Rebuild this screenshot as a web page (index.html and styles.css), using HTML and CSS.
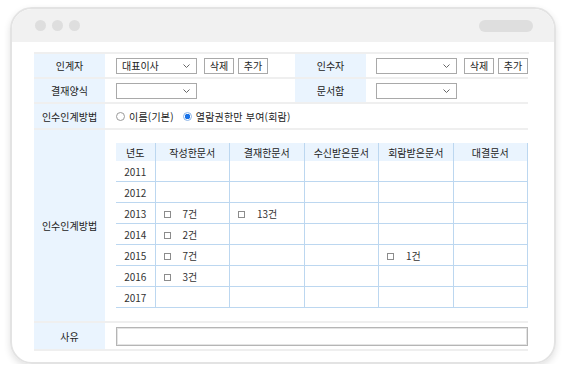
FILE: index.html
```html
<!DOCTYPE html>
<html lang="ko">
<head>
    <meta charset="UTF-8">
    <meta name="viewport" content="width=device-width, initial-scale=1.0">
    <title>인수인계</title>
    <link rel="stylesheet" href="styles.css">
</head>
<body>
<div class="window">
    <div class="titlebar">
        <div class="dots"><span></span><span></span><span></span></div>
        <div class="pill"></div>
    </div>

    <div class="content">
        <div class="form">
            <div class="label">인계자</div>
            <div class="value">
                <div class="select"><span>대표이사</span><svg width="7" height="4" viewBox="0 0 7 4"><path d="M0.5 0.5 L3.5 3.5 L6.5 0.5" fill="none" stroke="#666" stroke-width="1"/></svg></div>
                <button class="btn">삭제</button>
                <button class="btn">추가</button>
            </div>
            <div class="label">인수자</div>
            <div class="value value-right">
                <div class="select"><span></span><svg width="7" height="4" viewBox="0 0 7 4"><path d="M0.5 0.5 L3.5 3.5 L6.5 0.5" fill="none" stroke="#666" stroke-width="1"/></svg></div>
                <button class="btn">삭제</button>
                <button class="btn">추가</button>
            </div>

            <div class="label">결재양식</div>
            <div class="value">
                <div class="select"><span></span><svg width="7" height="4" viewBox="0 0 7 4"><path d="M0.5 0.5 L3.5 3.5 L6.5 0.5" fill="none" stroke="#666" stroke-width="1"/></svg></div>
            </div>
            <div class="label">문서함</div>
            <div class="value value-right">
                <div class="select"><span></span><svg width="7" height="4" viewBox="0 0 7 4"><path d="M0.5 0.5 L3.5 3.5 L6.5 0.5" fill="none" stroke="#666" stroke-width="1"/></svg></div>
            </div>

            <div class="label row3">인수인계방법</div>
            <div class="value wide row3">
                <label class="radio"><span class="dot"></span>이름(기본)</label>
                <label class="radio"><span class="dot on"></span>열람권한만 부여(회람)</label>
            </div>

            <div class="label row4">인수인계방법</div>
            <div class="value wide row4">
                <table class="years">
                    <colgroup>
                        <col class="c-year"><col><col><col><col><col>
                    </colgroup>
                    <tr>
                        <th>년도</th><th>작성한문서</th><th>결재한문서</th><th>수신받은문서</th><th>회람받은문서</th><th>대결문서</th>
                    </tr>
                    <tr><td class="year">2011</td><td></td><td></td><td></td><td></td><td></td></tr>
                    <tr><td class="year">2012</td><td></td><td></td><td></td><td></td><td></td></tr>
                    <tr><td class="year">2013</td><td><span class="chk"></span>7건</td><td><span class="chk"></span>13건</td><td></td><td></td><td></td></tr>
                    <tr><td class="year">2014</td><td><span class="chk"></span>2건</td><td></td><td></td><td></td><td></td></tr>
                    <tr><td class="year">2015</td><td><span class="chk"></span>7건</td><td></td><td></td><td><span class="chk"></span>1건</td><td></td></tr>
                    <tr><td class="year">2016</td><td><span class="chk"></span>3건</td><td></td><td></td><td></td><td></td></tr>
                    <tr><td class="year">2017</td><td></td><td></td><td></td><td></td><td></td></tr>
                </table>
            </div>

            <div class="label row5">사유</div>
            <div class="value wide row5">
                <div class="textbox"></div>
            </div>
        </div>
    </div>
</div>
</body>
</html>
```

FILE: styles.css
```css
body {
    margin: 0;
    padding: 0;
    background: #fff;
    font-family: "Noto Sans CJK KR", "Noto Sans", sans-serif;
    font-size: 10px;
    color: #222;
}

.window {
    box-sizing: border-box;
    width: 546px;
    height: 357px;
    margin: 7px 0 0 10px;
    border: 2px solid #e3e3e3;
    border-radius: 22px;
    overflow: hidden;
    box-shadow: 0 3px 7px rgba(0, 0, 0, 0.12);
}

.titlebar {
    height: 33px;
    background: #f1f1f1;
    display: flex;
    align-items: center;
    justify-content: space-between;
    padding: 0 21px 0 23px;
}

.dots {
    display: flex;
    gap: 6px;
}

.dots span {
    width: 11px;
    height: 11px;
    border-radius: 50%;
    background: #dedede;
}

.pill {
    width: 54px;
    height: 12px;
    border-radius: 6px;
    background: #dedede;
}

.content {
    padding: 10px 25px 0 22px;
}

.form {
    display: grid;
    grid-template-columns: 71px 190px 71px 162px;
    border-top: 2px solid #efefef;
}

.label,
.value {
    box-sizing: border-box;
    height: 25px;
    border-bottom: 2px solid #efefef;
    display: flex;
    align-items: center;
}

.label {
    justify-content: center;
    background: #eaf4fe;
    color: #222;
}

.value {
    padding-left: 11px;
    gap: 4px;
}

.value-right {
    padding-left: 10px;
}

.wide {
    grid-column: span 3;
}

.row3 { height: 26px; }
.row4 { height: 193px; }
.row5 { height: 28px; }

.value.row4 {
    align-items: flex-start;
    padding-top: 13px;
}

.select {
    box-sizing: border-box;
    width: 81px;
    height: 16px;
    border: 1px solid #a9a9a9;
    display: flex;
    align-items: center;
    justify-content: space-between;
    padding: 0 6px 0 5px;
    margin-right: 3px;
    color: #222;
}

.btn {
    box-sizing: border-box;
    width: 30px;
    height: 16px;
    padding: 0;
    border: 1px solid #a9a9a9;
    background: #fff;
    font-family: inherit;
    font-size: 10px;
    color: #222;
    line-height: 1;
}

.radio {
    display: flex;
    align-items: center;
    gap: 4px;
    margin-right: 5px;
    color: #222;
    letter-spacing: 0.2px;
}

.dot {
    box-sizing: border-box;
    width: 9px;
    height: 9px;
    border-radius: 50%;
    border: 1px solid #9a9a9a;
    background: #fff;
}

.dot.on {
    border-color: #8ab4e8;
    background: radial-gradient(circle, #1a73e8 0 2.5px, #fff 3px);
}

.years {
    width: 412px;
    border-collapse: collapse;
    table-layout: fixed;
}

.c-year {
    width: 39px;
}

.years th {
    height: 18px;
    padding: 0;
    background: #eaf4fe;
    font-weight: normal;
    color: #222;
    border-right: 1px solid #bcd7f0;
}

.years td {
    height: 20px;
    padding: 0 0 0 8px;
    border-right: 1px solid #bcd7f0;
    border-bottom: 1px solid #bcd7f0;
    color: #333;
}

.years td.year {
    padding: 0;
    text-align: center;
}

.chk {
    display: inline-block;
    box-sizing: border-box;
    width: 7px;
    height: 7px;
    border: 1px solid #8c8c8c;
    margin-right: 12px;
    vertical-align: 0;
}

.textbox {
    box-sizing: border-box;
    width: 412px;
    height: 19px;
    border: 1px solid #b5b5b5;
    box-shadow: inset 0 0 0 1px #e4e4e4;
}
```
